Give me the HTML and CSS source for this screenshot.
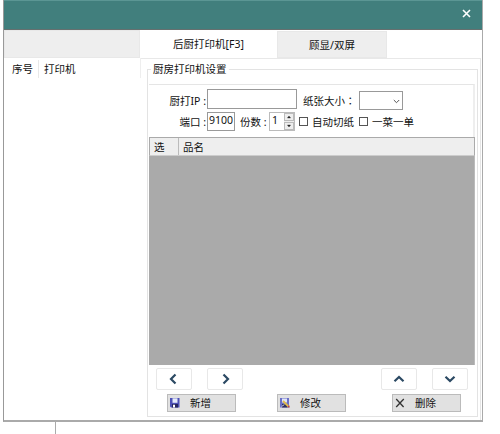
FILE: index.html
```html
<!DOCTYPE html>
<html lang="zh-CN">
<head>
<meta charset="utf-8">
<title>打印机设置</title>
<link rel="stylesheet" href="styles.css">
</head>
<body>
<main class="window">
  <header class="titlebar">
    <svg class="close" viewBox="0 0 9 9"><path d="M1 1 8 8M8 1 1 8"/></svg>
  </header>
  <nav class="tabs">
    <div class="tab tab-blank"></div>
    <div class="tab tab-active">后厨打印机[F3]</div>
    <div class="tab tab-other">顾显/双屏</div>
  </nav>
  <div class="content">
    <section class="list">
      <div class="list-head"><span class="col-no">序号</span><span class="col-name">打印机</span></div>
    </section>
    <section class="pane">
      <fieldset class="group">
        <legend>厨房打印机设置</legend>
        <div class="form">
          <div class="row row-ip">
            <span class="label">厨打IP :</span>
            <span class="box ip"></span>
            <span class="size-label">纸张大小<span class="colon" lang="zh-TW">：</span></span>
            <span class="box select"><svg viewBox="0 0 7 5"><path d="M.8 1 3.5 3.7 6.2 1"/></svg></span>
          </div>
          <div class="row row-port">
            <span class="label">端口 :</span>
            <span class="box port">9100</span>
            <span class="copies">份数 :</span>
            <span class="spinner"><span class="value">1</span><span class="arrows">
              <svg viewBox="0 0 10 8"><path d="M3 5.2 5 2.8 7 5.2Z"/></svg>
              <svg viewBox="0 0 10 8"><path d="M3 2.8 5 5.2 7 2.8Z"/></svg>
            </span></span>
            <span class="check"></span><span class="check-label">自动切纸</span>
            <span class="check second"></span><span class="check-label">一菜一单</span>
          </div>
        </div>
        <div class="table-head"><span class="col-pick">选</span><span class="col-item">品名</span></div>
        <div class="table-body"></div>
        <div class="moves">
          <span class="move left"><svg viewBox="0 0 12 12"><path d="M7.5 1.5 3 6 7.5 10.5"/></svg></span>
          <span class="move right"><svg viewBox="0 0 12 12"><path d="M4.5 1.5 9 6 4.5 10.5"/></svg></span>
          <span class="move up"><svg viewBox="0 0 12 12"><path d="M1.5 8.2 6 3.9 10.5 8.2"/></svg></span>
          <span class="move down"><svg viewBox="0 0 12 12"><path d="M1.5 3.8 6 8.1 10.5 3.8"/></svg></span>
        </div>
        <div class="actions">
          <span class="action add"><svg viewBox="0 0 10 10"><path fill="#4c50b5" d="M0 0h9.5v9.5H1L0 8.5Z"/><path fill="#e4eafa" d="M2.5 .3h5v4.5h-5Z"/><path fill="#27275f" d="M2 6h6v3.5H2Z"/><path fill="#fff" d="M3 6.8h2v2.7H3Z"/></svg>新增</span>
          <span class="action edit"><svg viewBox="0 0 10 10"><path fill="#6a6fc6" d="M0 0h9v9.5H0Z"/><path fill="#dfe5f8" d="M2 .5h5v4H2Z"/><path fill="#30305e" d="M2 6h5.5v3.5H2Z"/><path stroke="#e2bd4b" stroke-width="1.8" d="m3 3 5.5 5.5"/><path fill="#b9454b" d="m7.7 8 1.5-.7.7 2.2H8Z"/><path stroke="#fff" d="m2 8.5 2-2"/></svg>修改</span>
          <span class="action delete"><svg viewBox="0 0 10 10"><path fill="none" stroke="#333" stroke-width="1.3" d="m1.2 1 7.4 8M8.8 1 1.2 9"/></svg>删除</span>
        </div>
      </fieldset>
    </section>
  </div>
</main>
<div class="stem"></div>
</body>
</html>
```
FILE: styles.css
```css
* { box-sizing: border-box; }
body {
  margin: 0;
  width: 500px;
  height: 434px;
  overflow: hidden;
  background: #fff;
  color: #111;
  font: 10.5px/14px "Noto Sans", "Noto Sans CJK SC", sans-serif;
  white-space: nowrap;
}
svg { display: block; flex: none; }
.window {
  width: 480px;
  height: 422px;
  margin-left: 3px;
  border: 1px solid #999;
  border-top: 0;
  border-right-color: #aaa;
  border-bottom-width: 2px;
  border-bottom-color: #aaa;
}
.titlebar {
  height: 30px;
  display: flex;
  justify-content: flex-end;
  padding: 8px 11px 0 0;
  background: #417f7d;
  border-top: 1px solid #5b9694;
  border-bottom: 1px solid #66706f;
}
.close { width: 9px; height: 9px; }
.close path { fill: none; stroke: #fff; stroke-width: 1.6; }
.tabs { height: 28px; display: flex; }
.tab { display: flex; align-items: center; justify-content: center; }
.tab-blank, .tab-other { background: #eee; border: 1px solid #e8e8e8; }
.tab-blank { width: 136px; }
.tab-active { width: 137px; padding-top: 0; }
.tab-other { width: 110px; padding-top: 1px; margin-top: 1px; }
.content { display: flex; height: 362px; }
.list { width: 137px; }
.list-head { display: flex; height: 20px; padding-top: 2px; border-right: 1px solid #eee; }
.list-head span { height: 18px; line-height: 19px; }
.col-no { width: 35px; padding-left: 8px; border-right: 1px solid #e8e8e8; }
.col-name { padding-left: 5px; }
.pane {
  width: 340px;
  padding: 3px 3px 0 6px;
  border-top: 1px solid #e8e8e8;
  border-right: 1px solid #e5e5e5;
}
.group {
  min-width: 0;
  width: 331px;
  height: 355px;
  margin: 0;
  padding: 8px 2px 0 1px;
  border: 1px solid #e3e3e3;
}
legend { height: 14px; margin-left: 2px; padding: 0 2px; line-height: 14px; }
.form {
  height: 53px;
  padding-top: 4px;
  border-top: 1px solid #e5e5e5;
  border-right: 2px solid #eee;
}
.row { display: flex; }
.row-ip { height: 23px; }
.label { width: 58px; padding-right: 1px; text-align: right; line-height: 24px; }
.box { border: 1px solid #999; background: #fff; flex: none; }
.ip { width: 90px; height: 20px; }
.size-label { width: 56px; margin-left: 6px; line-height: 24px; }
.colon { font-family: "Noto Sans CJK TC", sans-serif; }
.select { width: 44px; height: 19px; margin-top: 2px; padding: 7px 2px 0 0; }
.select svg { width: 7px; height: 5px; margin-left: auto; }
.select path { fill: none; stroke: #555; }
.row-port .label { line-height: 20px; }
.port { width: 28px; height: 19px; padding-left: 1px; line-height: 15px; }
.copies { width: 29px; margin-left: 5px; line-height: 20px; }
.spinner { display: flex; width: 26px; height: 19px; border: 1px solid #bbb; flex: none; }
.value { width: 14px; padding-left: 2px; line-height: 15px; }
.arrows { width: 10px; height: 17px; background: #eee; }
.arrows svg { width: 10px; height: 8px; border: 1px solid #bbb; margin-bottom: 1px; }
.arrows path { fill: #222; stroke: #222; stroke-width: .6; }
.check { width: 9px; height: 9px; border: 1px solid #555; margin: 5px 4px 0; flex: none; }
.check-label { width: 42px; line-height: 20px; }
.second { margin-left: 5px; }
.table-head {
  display: flex;
  height: 19px;
  line-height: 18px;
  background: #eee;
  border: 1px solid #aaa;
  border-bottom-color: #ccc;
}
.col-pick { width: 29px; padding-left: 4px; border-right: 1px solid #bbb; }
.col-item { padding-left: 4px; }
.table-body { height: 209px; background: #aaa; border-right: 1px solid #bbb; }
.moves { display: flex; height: 29px; padding: 3px 0 0 7px; }
.move {
  display: flex;
  align-items: center;
  justify-content: center;
  width: 36px;
  height: 22px;
  border: 1px solid #e8e8e8;
  border-radius: 2px;
}
.move svg { width: 12px; height: 12px; }
.move path { fill: none; stroke: #2b4963; stroke-width: 2.2; }
.right { margin-left: 15px; }
.up { margin-left: 138px; }
.down { margin-left: 15px; }
.actions { display: flex; padding-left: 18px; }
.action {
  display: flex;
  width: 69px;
  height: 18px;
  padding: 3px 0 0 2px;
  border: 1px solid #bbb;
  background: #e1e1e1;
  line-height: 11px;
}
.action svg { width: 10px; height: 10px; margin-right: 10px; }
.edit { margin-left: 41px; }
.delete { margin-left: 46px; }
.stem { width: 1px; height: 12px; margin-left: 52px; margin-left: 55px; background: #aaa; }
```
